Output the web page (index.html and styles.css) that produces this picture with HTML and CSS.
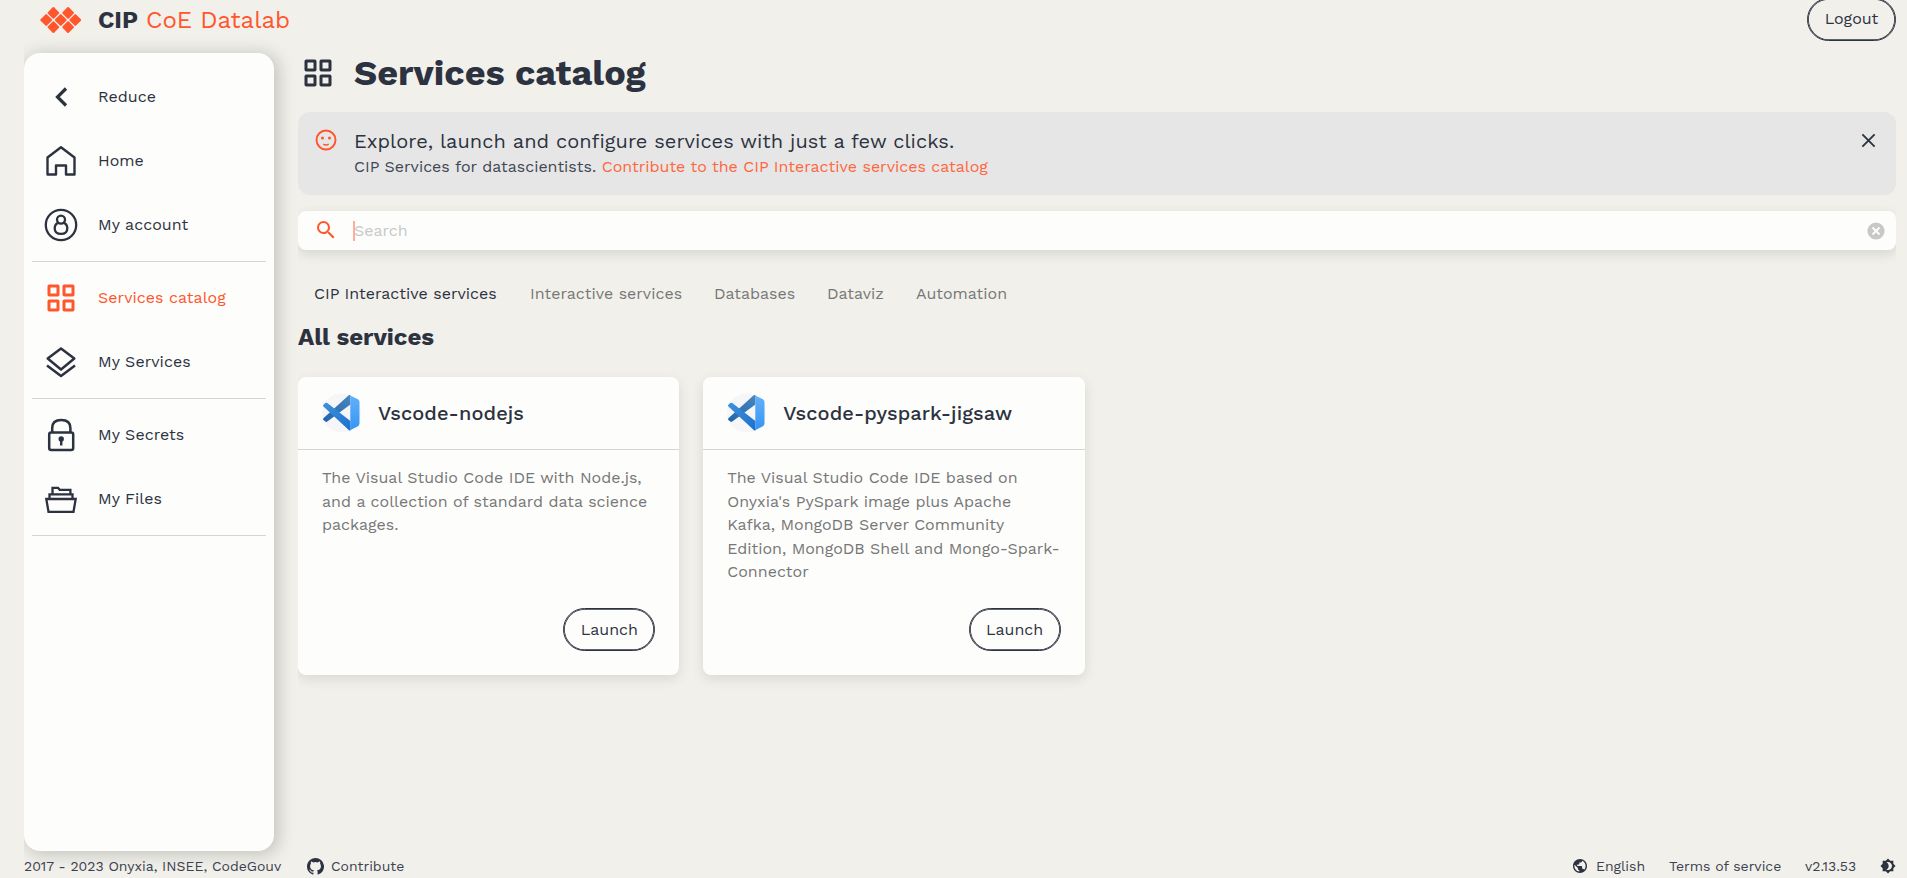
FILE: index.html
```
<!DOCTYPE html>
<html lang="en">
<head>
<meta charset="utf-8">
<title>CIP CoE Datalab</title>
<link rel="stylesheet" href="styles.css">
</head>
<body>
<svg class="defs" aria-hidden="true">
  <defs>
    <linearGradient id="vsRight" x1="0" y1="0" x2="0" y2="1"><stop offset="0" stop-color="#62b2fb"/><stop offset="1" stop-color="#3594f2"/></linearGradient>
    <linearGradient id="vsUp" x1="0" y1="1" x2="1" y2="0"><stop offset="0" stop-color="#1f65ae"/><stop offset="1" stop-color="#4a86bd"/></linearGradient>
    <linearGradient id="vsDown" x1="0" y1="0" x2="1" y2="1"><stop offset="0" stop-color="#3e92de"/><stop offset="1" stop-color="#1d70cb"/></linearGradient>
  </defs>
  <symbol id="grid" viewBox="0 0 28 28"><g fill="none" stroke="currentColor" stroke-width="3"><rect x="2" y="2" width="9" height="9" rx=".3"/><rect x="17" y="2" width="9" height="9" rx=".3"/><rect x="2" y="17" width="9" height="9" rx=".3"/><rect x="17" y="17" width="9" height="9" rx=".3"/></g></symbol>
  <symbol id="vscode" viewBox="0 0 40 40">
    <circle cx="19.5" cy="20" r="19.6" fill="#f6f6f8"/>
    <path fill="url(#vsUp)" d="M1.4 25.3 27 2.1 28.4 2v9.4L5.3 28.5Q4.4 29.3 3.3 28.5L1.4 27Q.5 26.2 1.4 25.3Z"/>
    <path fill="url(#vsDown)" d="M1.4 13.4Q.5 12.5 1.4 11.7L3.3 10.1Q4.4 9.4 5.3 10.1L28.4 28v9.5L27 37.2Z"/>
    <path fill="url(#vsRight)" d="M27 1.9 35.5 6Q37.5 7 37.5 9v21.500Q37.5 32.500 35.5 33.500L27 37.700Q28.300 37 28.300 35V4.500Q28.300 2.500 27 1.900Z"/>
  </symbol>
</svg>
<header class="header">
  <a class="brand">
    <svg class="brand-logo" viewBox="0 0 42 28"><g fill="#ff562c">
      <rect id="d" x="8.950" y="2.450" width="8.900" height="8.900" rx="1" transform="rotate(45 13.400 6.900)"/>
      <use href="#d" x="14.700"/><use href="#d" x="-7.200" y="7.100"/><use href="#d" x="7.350" y="7.100"/><use href="#d" x="21.900" y="7.100"/><use href="#d" y="14.200"/><use href="#d" x="14.700" y="14.200"/></g></svg>
    <span class="brand-org">CIP</span><span class="brand-name">CoE Datalab</span>
  </a>
  <button class="btn logout">Logout</button>
</header>
<div class="body">
  <nav class="sidebar">
    <a class="item"><span class="ico"><svg width="36" height="36" viewBox="0 0 36 36"><path d="M23 9.500 14.500 18l8.500 8.500" fill="none" stroke="currentColor" stroke-width="3.200"/></svg></span><span>Reduce</span></a>
    <a class="item"><span class="ico"><svg width="36" height="36" viewBox="0 0 36 36"><path d="M4.500 14.500 18 4.200l13.500 10.300V31.500H23V22.500H13v9H4.500Z" fill="none" stroke="currentColor" stroke-width="2.400" stroke-linejoin="round"/></svg></span><span>Home</span></a>
    <a class="item"><span class="ico"><svg width="36" height="36" viewBox="0 0 36 36"><g fill="none" stroke="currentColor" stroke-width="2.300"><circle cx="18" cy="18" r="15.200"/><circle cx="18" cy="12.600" r="4"/><path d="M15.600 15.600C12.800 16.700 11.700 18.700 11.700 21.200 11.700 25 14.200 26.900 18 26.900S24.300 25 24.300 21.200C24.300 18.700 23.200 16.700 20.400 15.600"/></g></svg></span><span>My account</span></a>
    <hr>
    <a class="item active"><span class="ico"><svg width="28" height="28"><use href="#grid"/></svg></span><span>Services catalog</span></a>
    <a class="item"><span class="ico"><svg width="36" height="36" viewBox="0 0 36 36"><g fill="none" stroke="currentColor" stroke-width="2.500" stroke-linejoin="round"><path d="M18 4.500 31.300 14.500 18 25.500 4.700 14.500Z"/><path d="M4 21.500 18 32 32 21.500"/></g></svg></span><span>My Services</span></a>
    <hr>
    <a class="item"><span class="ico"><svg width="36" height="36" viewBox="0 0 36 36"><g fill="none" stroke="currentColor" stroke-width="2.500"><rect x="6.200" y="15.500" width="24" height="17.600" rx="2"/><path d="M9.200 15.500v-4.500C9.200 5.500 12.500 3 18.200 3S27.400 5.500 27.400 11v4.500"/></g><circle cx="18.200" cy="22" r="2.700" fill="currentColor"/><path d="M17 22h2.400v6.500H17Z" fill="currentColor"/></svg></span><span>My Secrets</span></a>
    <a class="item"><span class="ico"><svg width="36" height="36" viewBox="0 0 36 36"><g fill="none" stroke="currentColor" stroke-width="2.300"><path d="M3.300 18h29.400L30.500 30.800H5.500Z"/><path d="M6.500 18v-4.600h23V18M9.500 13.400V6.800h5.500l1.700 2h10.700v4.600"/></g></svg></span><span>My Files</span></a>
    <hr>
  </nav>
  <main class="main">
    <div class="page-title"><svg class="title-icon"><use href="#grid"/></svg><h1>Services catalog</h1></div>
    <section class="banner">
      <svg class="smile" viewBox="0 0 22 22"><circle cx="11" cy="11" r="9.500" fill="none" stroke="currentColor" stroke-width="1.900"/><circle cx="7.500" cy="8.900" r="1.500" fill="currentColor"/><circle cx="14.500" cy="8.900" r="1.500" fill="currentColor"/><path d="M8.300 15.300q2.700 1.200 5.400 0" fill="none" stroke="currentColor" stroke-width="1.500"/></svg>
      <div class="banner-text">
        <p class="lead">Explore, launch and configure services with just a few clicks.</p>
        <p class="sub">CIP Services for datascientists. <a>Contribute to the CIP Interactive services catalog</a></p>
      </div>
      <svg class="close" viewBox="0 0 16 16"><path d="M1.500 1.500 14.500 14.500M14.500 1.500 1.500 14.500" stroke="currentColor" stroke-width="2"/></svg>
    </section>
    <div class="search">
      <svg class="search-icon" viewBox="0 0 24 24"><path fill="currentColor" d="M15.500 14h-.790l-.280-.270A6.471 6.471 0 0 0 16 9.500 6.500 6.500 0 1 0 9.500 16c1.610 0 3.090-.590 4.230-1.570l.270.280v.790l5 4.990L20.490 19l-4.990-5zm-6 0C7.010 14 5 11.990 5 9.500S7.010 5 9.500 5 14 7.010 14 9.500 11.990 14 9.500 14z"/></svg>
      <span class="caret"></span><span class="placeholder">Search</span>
      <svg class="clear" viewBox="0 0 18 18"><circle cx="9" cy="9" r="8.600" fill="#c8c8c8"/><path d="M5.500 5.500l7 7M12.500 5.500l-7 7" stroke="#fdfdfb" stroke-width="1.900"/></svg>
    </div>
    <div class="tabs"><a class="current">CIP Interactive services</a><a>Interactive services</a><a>Databases</a><a>Dataviz</a><a>Automation</a></div>
    <h2>All services</h2>
    <div class="cards">
      <article class="card">
        <div class="card-head"><svg class="vs"><use href="#vscode"/></svg><h3>Vscode-nodejs</h3></div>
        <div class="card-body"><p>The Visual Studio Code IDE with Node.js,<br>and a collection of standard data science<br>packages.</p><button class="btn">Launch</button></div>
      </article>
      <article class="card">
        <div class="card-head"><svg class="vs"><use href="#vscode"/></svg><h3>Vscode-pyspark-jigsaw</h3></div>
        <div class="card-body"><p>The Visual Studio Code IDE based on<br>Onyxia's PySpark image plus Apache<br>Kafka, MongoDB Server Community<br>Edition, MongoDB Shell and Mongo-Spark-<br>Connector</p><button class="btn">Launch</button></div>
      </article>
    </div>
  </main>
</div>
<footer class="footer">
  <span class="copy">2017 - 2023 Onyxia, INSEE, CodeGouv</span>
  <svg class="github" viewBox="0 0 16 16"><path fill="currentColor" d="M8 0C3.580 0 0 3.580 0 8c0 3.540 2.290 6.530 5.470 7.590.4.070.550-.170.550-.380 0-.190-.010-.820-.010-1.490-2.010.370-2.530-.490-2.690-.940-.090-.230-.480-.940-.820-1.130-.280-.150-.680-.520-.010-.530.630-.010 1.080.580 1.230.820.720 1.210 1.870.870 2.330.660.070-.520.280-.870.510-1.070-1.780-.2-3.640-.890-3.640-3.950 0-.870.310-1.590.820-2.150-.080-.2-.360-1.020.080-2.120 0 0 .670-.210 2.200.820a7.600 7.600 0 0 1 4 0c1.530-1.040 2.200-.820 2.200-.820.440 1.100.160 1.920.080 2.120.510.560.820 1.270.820 2.150 0 3.070-1.870 3.750-3.650 3.950.290.250.540.730.540 1.480 0 1.070-.010 1.930-.010 2.200 0 .210.150.460.550.380A8 8 0 0 0 8 0Z"/></svg>
  <span class="contribute">Contribute</span>
  <span class="spacer"></span>
  <svg class="globe" viewBox="2 2 20 20"><path fill="currentColor" d="M12 2C6.480 2 2 6.480 2 12s4.480 10 10 10 10-4.480 10-10S17.520 2 12 2zm-1 17.930c-3.950-.490-7-3.850-7-7.930 0-.620.080-1.210.210-1.790L9 15v1c0 1.100.9 2 2 2v1.930zm6.900-2.540c-.260-.810-1-1.390-1.900-1.390h-1v-3c0-.550-.450-1-1-1H8v-2h2c.550 0 1-.450 1-1V7h2c1.100 0 2-.9 2-2v-.410c2.930 1.190 5 4.060 5 7.410 0 2.080-.8 3.970-2.100 5.390z"/></svg>
  <span class="lang">English</span>
  <span class="terms">Terms of service</span>
  <span class="version">v2.13.53</span>
  <svg class="theme" viewBox="0 0 24 24"><path fill="currentColor" d="M20 8.690V4h-4.690L12 .690 8.690 4H4v4.690L.690 12 4 15.310V20h4.690L12 23.310 15.310 20H20v-4.690L23.310 12 20 8.690zM12 18c-.890 0-1.740-.2-2.500-.550C11.560 16.500 13 14.420 13 12s-1.440-4.500-3.500-5.450C10.260 6.200 11.110 6 12 6c3.310 0 6 2.690 6 6s-2.690 6-6 6z"/></svg>
</footer>
</body>
</html>
```
FILE: styles.css
```
* { box-sizing: border-box; }
body {
  margin: 0;
  height: 878px;
  padding: 0 11px 0 24px;
  overflow: hidden;
  display: flex;
  flex-direction: column;
  background: #f1f0eb;
  color: #2c323f;
  font-family: "Work Sans", Inter, "Open Sans", sans-serif;
  font-size: 16px;
  white-space: nowrap;
}
.defs { display: block; width: 0; height: 0; flex: none; }
p, h1, h2, h3 { margin: 0; }
svg { flex: none; }

.header { height: 53px; flex: none; display: flex; justify-content: space-between; align-items: flex-start; }
.brand { display: flex; align-items: center; height: 40px; padding-left: 16px; font-size: 24px; }
.brand-logo { width: 42px; height: 28px; margin-right: 16px; }
.brand-org { width: 48px; font-weight: 700; }
.brand-name { color: #ff562c; font-weight: 400; }
.btn {
  height: 43px;
  padding: 0 0 1px;
  border: 1px solid #2c323f;
  border-radius: 22px;
  background: transparent;
  box-shadow: inset 0 0 0 .8px #2c323f;
  color: #2c323f;
  font: 400 16px/1 "Work Sans", Inter, "Open Sans", sans-serif;
}
.logout { width: 89px; margin-top: -2px; }

.body { display: flex; gap: 24px; height: 798px; flex: none; }
.sidebar {
  width: 250px;
  padding: 12px 8px;
  border-radius: 16px;
  background: #fdfdfb;
  box-shadow: 3px 2px 16px 2px rgba(44, 50, 40, .22);
  clip-path: inset(-18px -26px -26px 0);
}
.item { display: flex; align-items: center; height: 64px; padding-bottom: 1px; letter-spacing: .04px; }
.ico { width: 57px; display: flex; justify-content: center; margin-right: 9px; }
.active { color: #ff562c; }
.sidebar hr { height: 1px; margin: 4px 0; border: 0; background: #d5d5d3; }

.main { width: 1598px; clip-path: inset(0); }
.page-title { display: flex; align-items: center; height: 40px; padding-left: 5.500px; }
.title-icon { width: 28px; height: 28px; }
h1 { margin-left: 22.500px; font-size: 36px; line-height: 40px; }
.banner { display: flex; height: 83px; margin-top: 19px; padding: 17px 20.500px 0 16.500px; border-radius: 12px; background: #e6e6e6; }
.smile { width: 22px; height: 22px; }
.smile, .search-icon { color: #ff562c; }
.banner-text { flex: 1; padding-left: 17.500px; }
.lead { font-size: 20px; line-height: 25px; letter-spacing: .04px; }
.sub { line-height: 26px; color: #414754; }
.sub a { color: #ff6640; }
.close { width: 15px; height: 15px; margin-top: 4px; }
.search { display: flex; align-items: center; height: 39px; margin-top: 16px; padding: 0 11px 0 15.500px; border-radius: 8px; background: #fdfdfb; box-shadow: 0 4px 12px rgba(60, 60, 40, .15); }
.search-icon { width: 24px; height: 24px; margin-bottom: 1px; }
.caret { width: 2px; height: 20px; margin-left: 15.500px; margin-right: -1px; background: #ffac98; }
.placeholder { flex: 1; color: #c8c8c8; }
.clear { width: 18px; height: 18px; }
.tabs { display: grid; grid-template-columns: 216px 184px 113px 89px 120px; height: 48px; margin-top: 19px; margin-bottom: 1px; padding-left: 16px; align-items: center; color: #777; }
.current { color: #2c323f; }
h2 { height: 38px; line-height: 38px; font-size: 24px; }
.cards { display: flex; gap: 24px; margin-top: 21px; }
.card { width: 381.300px; height: 298px; display: flex; flex-direction: column; border-radius: 8px; background: #fdfdfb; box-shadow: 0 4px 12px rgba(60, 60, 40, .13); }
.card-head { display: flex; align-items: center; height: 73px; flex: none; padding-left: 24px; border-bottom: 1px solid #d5d5d3; }
.vs { width: 40px; height: 40px; }
h3 { margin-left: 16px; font-size: 20px; font-weight: 500; letter-spacing: .08px; }
.card-body { flex: 1; display: flex; flex-direction: column; justify-content: space-between; padding: 16px 24px 24px; color: #777; line-height: 23.500px; }
.card-body .btn { width: 92px; padding-bottom: 0; padding-top: 1px; align-self: flex-end; }

.footer { height: 27px; display: flex; align-items: center; padding-top: 3px; font-size: 14px; }
.footer span { color: #3c4250; }
.copy { width: 283px; }
.github { width: 17px; height: 17px; margin-right: 7px; }
.spacer { flex: 1; }
.globe { width: 14px; height: 14px; margin-right: 9px; }
.lang { width: 73px; }
.terms { width: 136px; }
.version { width: 75px; }
.theme { width: 16px; height: 16px; }
```
